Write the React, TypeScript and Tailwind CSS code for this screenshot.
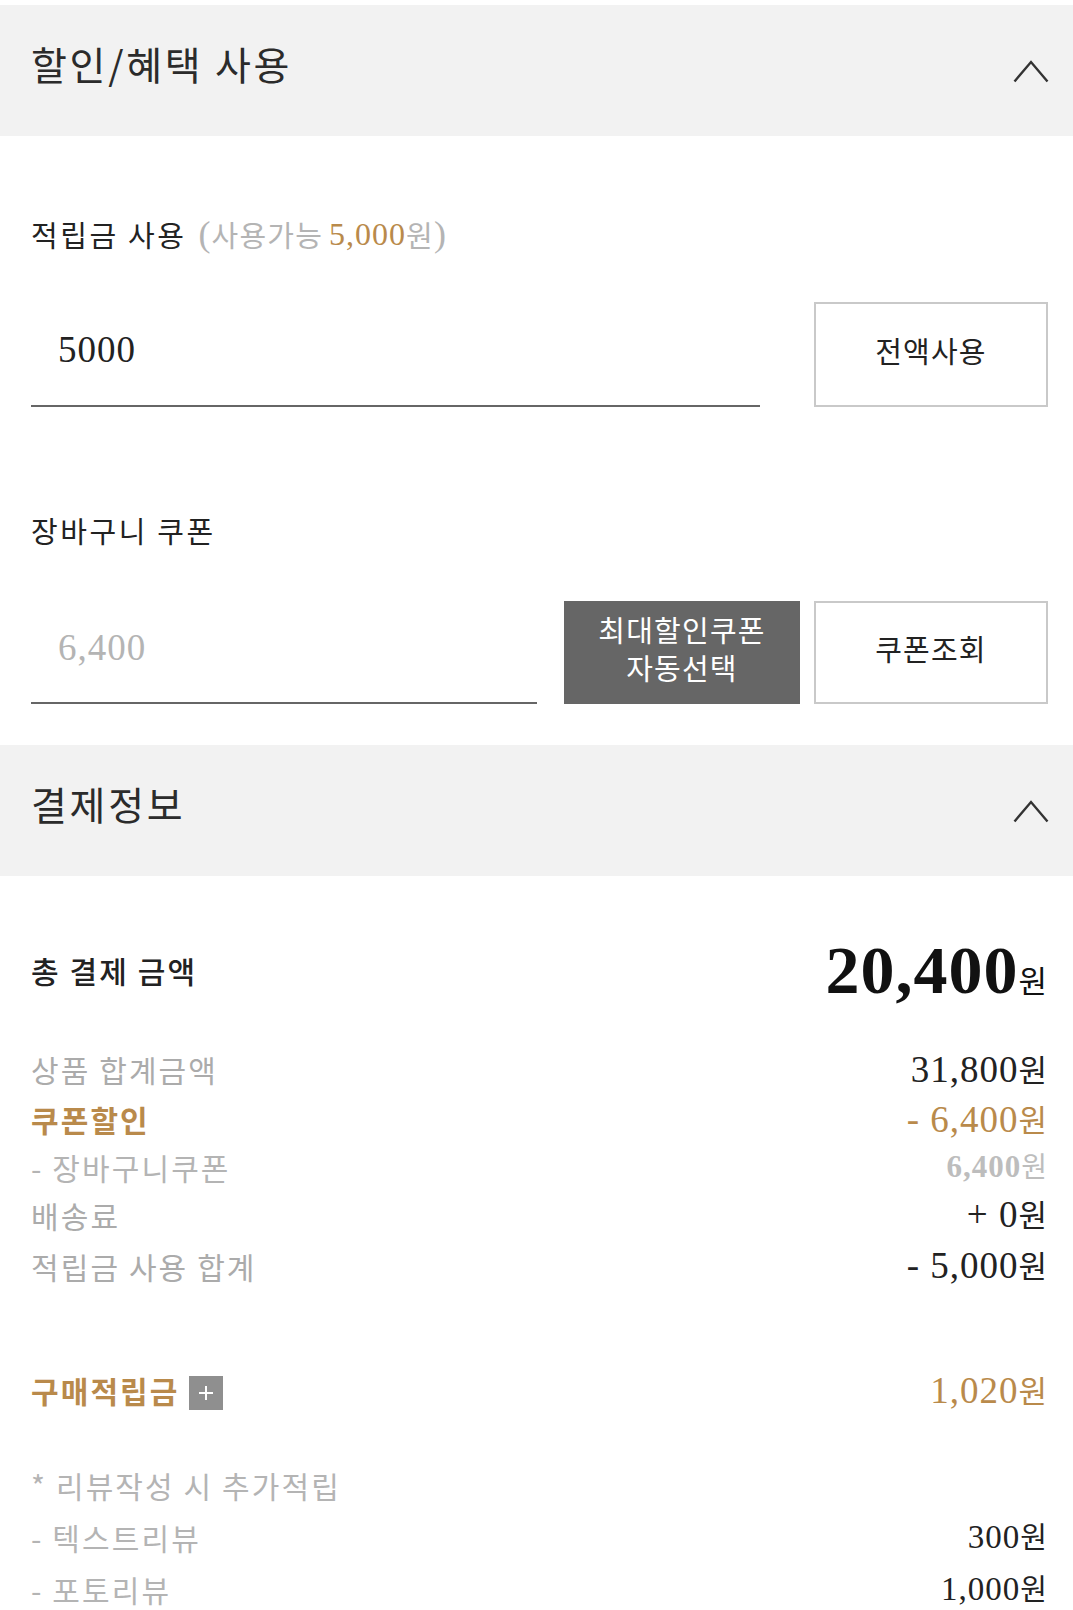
import type { FC, ReactNode } from "react";

// ─── SHARED ───────────────────────────────────────────────────────────────────

const SANS = "font-['Noto_Sans_CJK_KR','Noto_Sans',sans-serif]";
const SERIF = "font-['Liberation_Serif','Noto_Sans_CJK_KR',serif] tracking-[1px]";

const ChevronUp: FC = () => (
  <svg width="36" height="24" viewBox="0 0 36 24" fill="none">
    <polyline points="1.5,22.5 18,3 34.5,22.5" stroke="#333" strokeWidth="2.4" />
  </svg>
);

const SectionHeader: FC<{ title: string }> = ({ title }) => (
  <div className="flex h-[131px] items-center justify-between bg-[#f2f2f2] pl-[31px] pr-[24px]">
    <span className="mb-[14px] text-[39px] leading-none tracking-[0.07em] text-[#2b2b2b]">
      {title}
    </span>
    <ChevronUp />
  </div>
);

/** Serif digits followed by a sans "원" */
const Won: FC<{
  value: string;
  size?: string;
  wonSize?: string;
  className?: string;
}> = ({ value, size = "text-[37px]", wonSize = "text-[31px]", className = "" }) => (
  <span className={`flex items-baseline whitespace-pre leading-none ${className}`}>
    <span className={`${SERIF} ${size}`}>{value}</span>
    <span className={`${SANS} ${wonSize} tracking-normal`}>원</span>
  </span>
);

const Row: FC<{ h: string; left: ReactNode; right?: ReactNode }> = ({ h, left, right }) => (
  <div className={`flex items-center justify-between ${h}`}>
    <div className="flex items-center">{left}</div>
    {right}
  </div>
);

// ─── APP ──────────────────────────────────────────────────────────────────────

export default function App() {
  return (
    <div className={`min-h-[1610px] w-[1073px] bg-white pt-[5px] tracking-[0.075em] ${SANS}`}>
      {/* ── 할인/혜택 사용 ── */}
      <SectionHeader title="할인/혜택 사용" />

      <div className="pl-[31px] pr-[25px] pb-[41px]">
        {/* 적립금 */}
        <div className="mt-[78px] flex h-[40px] items-center text-[29px] leading-none">
          <span className="tracking-[0.09em] text-[#222]">적립금 사용</span>
          <span className="ml-[12px] flex items-center text-[#b4b4b4]">
            <span className={`${SERIF} text-[36px]`}>(</span>
            <span>사용가능</span>
            <span className={`${SERIF} ml-[6px] text-[32px] text-[#b98a4b]`}>5,000</span>
            <span>원</span>
            <span className={`${SERIF} text-[36px]`}>)</span>
          </span>
        </div>

        <div className="mt-[48px] flex h-[105px] items-stretch gap-[54px]">
          <div className="flex flex-1 items-center border-b-2 border-[#666] pb-[8px] pl-[27px]">
            <span className={`${SERIF} text-[37px] leading-none text-[#222]`}>5000</span>
          </div>
          <button className="w-[234px] border-2 border-[#c9c9c9] pb-[8px] text-[29px] leading-none text-[#222]">
            전액사용
          </button>
        </div>

        {/* 장바구니 쿠폰 */}
        <div className="mt-[103px] flex h-[40px] items-center text-[29px] leading-none tracking-[0.09em] text-[#222]">
          장바구니 쿠폰
        </div>

        <div className="mt-[51px] flex h-[103px] items-stretch">
          <div className="flex w-[506px] items-center border-b-2 border-[#666] pb-[8px] pl-[27px]">
            <span className={`${SERIF} text-[37px] leading-none text-[#b4b4b4]`}>6,400</span>
          </div>
          <button className="ml-[27px] flex w-[236px] flex-col items-center justify-center bg-[#666] pb-[10px] text-[29px] leading-[38px] text-white">
            <span>최대할인쿠폰</span>
            <span>자동선택</span>
          </button>
          <button className="ml-[14px] w-[234px] border-2 border-[#c9c9c9] pb-[8px] text-[29px] leading-none text-[#222]">
            쿠폰조회
          </button>
        </div>
      </div>

      {/* ── 결제정보 ── */}
      <SectionHeader title="결제정보" />

      <div className="pl-[31px] pr-[26px] text-[30px] leading-none tracking-[0.07em]">
        <Row
          h="mt-[54px] h-[80px]"
          left={<span className="font-medium text-[#222]">총 결제 금액</span>}
          right={
            <Won
              value="20,400"
              size="text-[68px] font-bold"
              wonSize="text-[31px]"
              className="text-[#111]"
            />
          }
        />

        <div className="mt-[34px]">
          <Row
            h="h-[50px]"
            left={<span className="text-[#ababab]">상품 합계금액</span>}
            right={<Won value="31,800" className="text-[#222]" />}
          />
          <Row
            h="h-[50px]"
            left={<span className="font-bold text-[#b98a4b]">쿠폰할인</span>}
            right={<Won value="- 6,400" className="text-[#b98a4b]" />}
          />
          <Row
            h="h-[45px]"
            left={<span className="text-[#b4b4b4]">- 장바구니쿠폰</span>}
            right={
              <Won
                value="6,400"
                size="text-[31px] font-bold"
                wonSize="text-[28px]"
                className="text-[#bdbdbd]"
              />
            }
          />
          <Row
            h="h-[51px]"
            left={<span className="text-[#ababab]">배송료</span>}
            right={<Won value="+ 0" className="text-[#222]" />}
          />
          <Row
            h="h-[51px]"
            left={<span className="text-[#ababab]">적립금 사용 합계</span>}
            right={<Won value="- 5,000" className="text-[#222]" />}
          />
        </div>

        <Row
          h="mt-[74px] h-[50px]"
          left={
            <>
              <span className="font-bold text-[#b98a4b]">구매적립금</span>
              <span className="ml-[9px] mt-[6px] flex h-[34px] w-[34px] items-center justify-center bg-[#8f8f8f]">
                <svg width="16" height="16" viewBox="0 0 16 16">
                  <path d="M8 1v14M1 8h14" stroke="#fff" strokeWidth="2" />
                </svg>
              </span>
            </>
          }
          right={<Won value="1,020" className="text-[#b98a4b]" />}
        />

        <div className="mt-[44px]">
          <Row h="h-[52px]" left={<span className="text-[#b4b4b4]">* 리뷰작성 시 추가적립</span>} />
          <Row
            h="h-[52px]"
            left={<span className="text-[#b4b4b4]">- 텍스트리뷰</span>}
            right={<Won value="300" size="text-[33px]" wonSize="text-[29px]" className="text-[#222]" />}
          />
          <Row
            h="h-[52px]"
            left={<span className="text-[#b4b4b4]">- 포토리뷰</span>}
            right={<Won value="1,000" size="text-[33px]" wonSize="text-[29px]" className="text-[#222]" />}
          />
        </div>
      </div>
    </div>
  );
}
